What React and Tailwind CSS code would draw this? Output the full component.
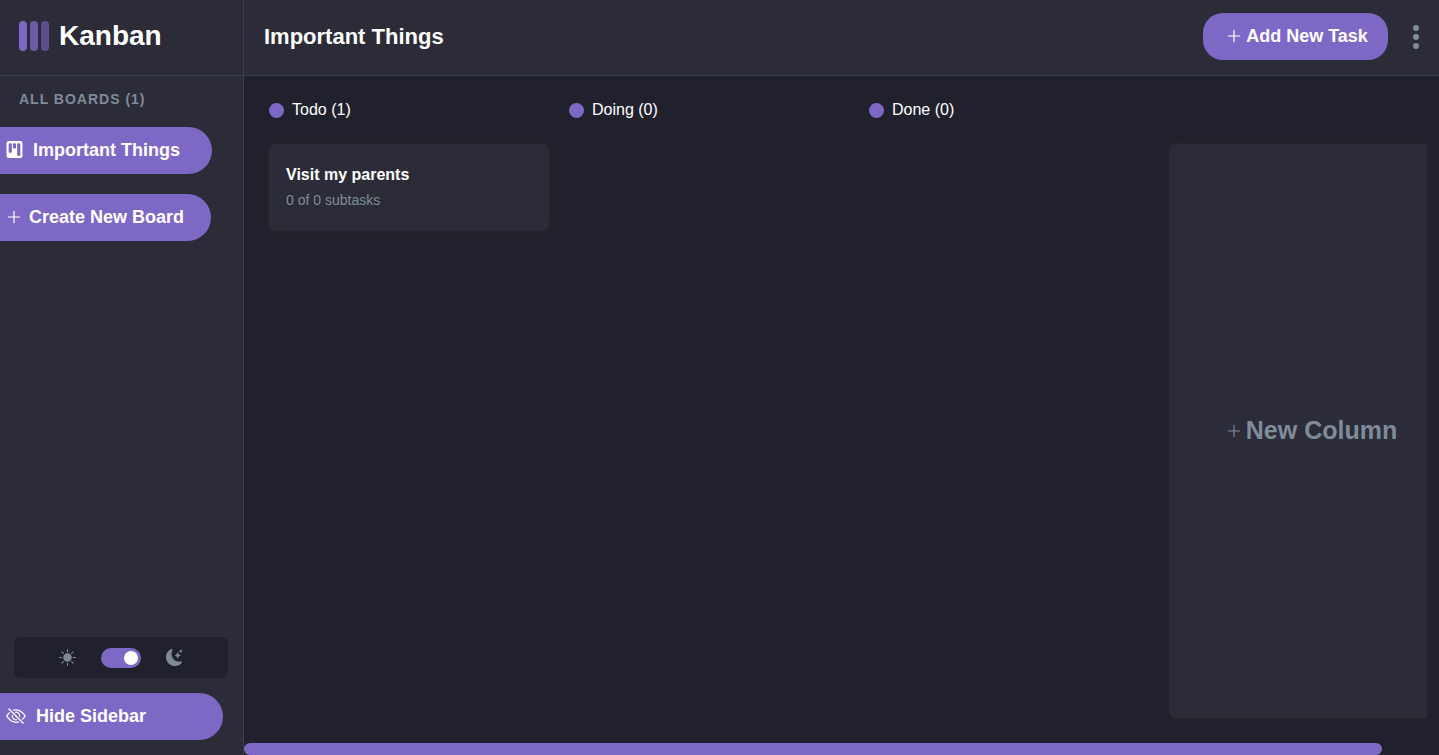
import { useState } from "react";
import {
  BsEyeSlash,
  BsKanbanFill,
  BsMoonStarsFill,
  BsSunFill,
} from "react-icons/bs";
import { RxPlus } from "react-icons/rx";

const columns = [
  { name: "Todo", tasks: [{ title: "Visit my parents", done: 0, total: 0 }] },
  { name: "Doing", tasks: [] },
  { name: "Done", tasks: [] },
];

function Logo() {
  return (
    <svg className="h-[30px] w-[30px]" viewBox="0 0 30 30" fill="#7e68c6" aria-hidden="true">
      <rect width="8" height="30" rx="4" />
      <rect x="11" width="8" height="30" rx="4" opacity="0.8" />
      <rect x="22" width="8" height="30" rx="4" opacity="0.6" />
    </svg>
  );
}

function Sidebar() {
  const [dark, setDark] = useState(true);
  return (
    <aside className="flex w-61 shrink-0 flex-col border-r border-[#3e3f4e] bg-[#2c2c38]">
      <div className="flex h-19 items-center gap-2.5 border-b border-[#3e3f4e] pb-[3px] pl-[19px]">
        <Logo />
        <span className="text-[28px] font-bold">Kanban</span>
      </div>
      <h2 className="mt-[11px] pl-[19px] text-sm/6 font-bold tracking-[1px] text-[#7f8b99]">
        ALL BOARDS (1)
      </h2>
      <nav className="mt-4 flex flex-col items-start gap-5 text-lg font-bold">
        <button className="flex h-[47px] w-[212px] items-center gap-2.5 rounded-r-full bg-[#7e68c6] pb-0.5 pl-1.5">
          <BsKanbanFill className="size-[17px]" />
          Important Things
        </button>
        <button className="flex h-[47px] w-[211px] items-center gap-1.5 rounded-r-full bg-[#7e68c6] pb-0.5 pl-[5px]">
          <RxPlus className="size-[18px]" />
          Create New Board
        </button>
      </nav>
      <div className="mt-auto mr-[15px] ml-3.5 flex h-[41px] items-center justify-center gap-[25px] rounded-md bg-[#21212d] text-[#7f8b99]">
        <BsSunFill className="size-[17px]" />
        <label className="flex">
          <input
            type="checkbox"
            checked={dark}
            onChange={() => setDark(!dark)}
            aria-label="Dark mode"
            className="peer sr-only"
          />
          <span className="flex h-5 w-10 items-center rounded-full bg-[#7e68c6] px-[3px] peer-checked:justify-end">
            <span className="size-3.5 rounded-full bg-white" />
          </span>
        </label>
        <BsMoonStarsFill className="size-[17px]" />
      </div>
      <button className="mt-[15px] mb-[15px] flex h-[47px] w-[223px] items-center gap-2.5 rounded-r-full bg-[#7e68c6] pb-0.5 pl-1.5 text-lg font-bold">
        <BsEyeSlash className="size-5" />
        Hide Sidebar
      </button>
    </aside>
  );
}

function Header() {
  return (
    <header className="flex h-19 items-center justify-between border-b border-[#3e3f4e] bg-[#2c2c38] pr-[15px] pb-0.5 pl-5">
      <h1 className="text-[22px] font-bold">Important Things</h1>
      <div className="flex items-center gap-5">
        <button className="flex h-[47px] w-[185px] items-center justify-center gap-[3px] rounded-[20px] bg-[#7e68c6] pb-0.5 pl-0.5 text-lg font-bold">
          <RxPlus className="size-[18px]" />
          Add New Task
        </button>
        <button aria-label="Board options" className="flex w-4 justify-center">
          <svg className="h-6 w-1.5" viewBox="0 0 6 24" fill="#7f8b99" aria-hidden="true">
            <circle cx="3" cy="3" r="3" />
            <circle cx="3" cy="12" r="3" />
            <circle cx="3" cy="21" r="3" />
          </svg>
        </button>
      </div>
    </header>
  );
}

function Column({ name, tasks }) {
  return (
    <section className="w-70 shrink-0">
      <h2 className="flex items-center gap-2 text-base">
        <span className="size-[15px] rounded-full bg-[#7e68c6]" />
        {name} ({tasks.length})
      </h2>
      <ul className="mt-[22px] flex flex-col gap-5">
        {tasks.map((t) => (
          <li
            key={t.title}
            className="h-[87px] rounded-lg bg-[#2c2c38] px-[17px] pt-[19px] shadow-[0_0_4px_#2a2a2a]"
          >
            <h3 className="text-base font-bold">{t.title}</h3>
            <p className="mt-[3px] text-sm text-[#7f8b99]">
              {t.done} of {t.total} subtasks
            </p>
          </li>
        ))}
      </ul>
    </section>
  );
}

export default function App() {
  return (
    <div className="flex min-h-screen bg-[#21212d] font-['Liberation_Sans',Arial,sans-serif] text-white">
      <Sidebar />
      <div className="flex min-w-0 flex-1 flex-col">
        <Header />
        <main className="flex min-h-0 flex-1 flex-col">
          <div className="mr-3 flex flex-1 gap-5 overflow-hidden pt-[22px] pb-[25px] pl-[25px]">
            {columns.map((c) => (
              <Column key={c.name} {...c} />
            ))}
            <button className="mt-[46px] flex w-71 shrink-0 items-center justify-center gap-[3px] rounded-lg bg-[#2c2c38] text-[25px] font-bold text-[#7f8b99] shadow-[0_0_4px_#2a2a2a]">
              <RxPlus className="size-[18px]" />
              New Column
            </button>
          </div>
          <div className="h-3">
            <div className="h-full w-[95.2%] rounded-full bg-[#7e68c6]" />
          </div>
        </main>
      </div>
    </div>
  );
}
